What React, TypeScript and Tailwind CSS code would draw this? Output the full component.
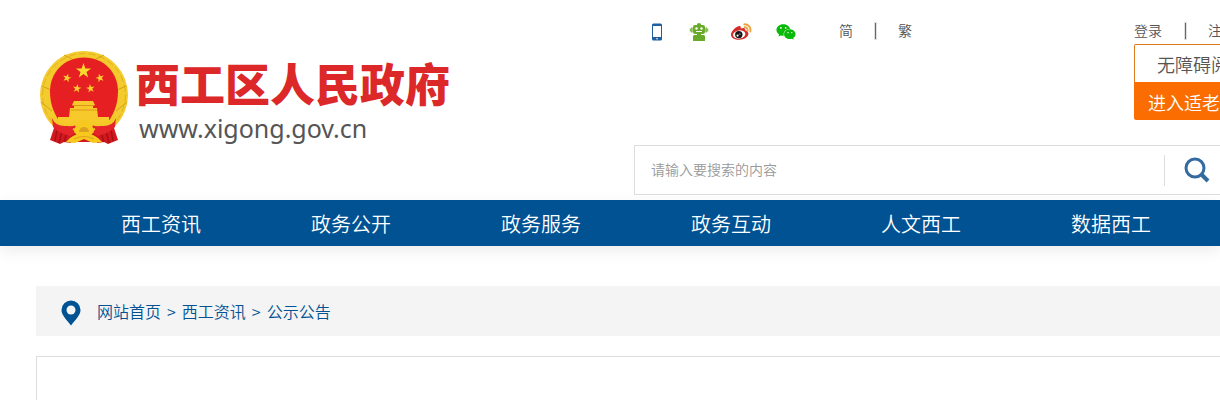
import { useState } from 'react';
import { FaWeixin } from 'react-icons/fa';

const navItems = ['西工资讯', '政务公开', '政务服务', '政务互动', '人文西工', '数据西工'];

const crumbs = ['网站首页', '西工资讯', '公示公告'];

const smallStars = [
  { x: 27, y: 28, r: 4.5, a: 15 },
  { x: 60, y: 28, r: 4.5, a: -15 },
  { x: 37, y: 38.5, r: 4.5, a: 10 },
  { x: 50.5, y: 38.5, r: 4.5, a: -10 }
];

function starPoints(cx: number, cy: number, r: number, rotate = 0) {
  return Array.from({ length: 10 }, (_, i) => {
    const radius = i % 2 === 0 ? r : r * 0.39;
    const angle = ((i * 36 - 90 + rotate) * Math.PI) / 180;
    return `${(cx + radius * Math.cos(angle)).toFixed(2)},${(cy + radius * Math.sin(angle)).toFixed(2)}`;
  }).join(' ');
}

function Emblem() {
  return (
    <svg className="w-22 h-24 shrink-0" viewBox="0 0 88 96" aria-hidden="true">
      <circle cx="44" cy="45" r="44" fill="#f3cb2c" />
      <circle cx="44" cy="45" r="41.5" fill="none" stroke="#e3b024" strokeWidth="1" strokeDasharray="7 3" />
      <path d="M1 52l11 9M2 36l9 4M87 52l-11 9M86 36l-9 4M24 5l8 4M64 5l-8 4" stroke="#d39f1d" strokeWidth="1" />
      <path d="M44 7.500c20 0 34 15 34 34 0 14-5 24-11 32H21c-6-8-11-18-11-32 0-19 14-34 34-34z" fill="#e61f22" />
      <polygon points={starPoints(43.5, 21, 8)} fill="#fbd92d" />
      {smallStars.map((s) => (
        <polygon key={`${s.x}-${s.y}`} points={starPoints(s.x, s.y, s.r, s.a)} fill="#fbd02d" />
      ))}
      {/* Gate tower */}
      <path d="M34 51h19l2 4-2 1v2h4l1 9h11v6H18v-6h11l1-9h4v-2l-2-1z" fill="#f8c92a" />
      <path d="M33 55.500h21M31 60h26" stroke="#dd951b" strokeWidth="1" />
      {/* Ribbon */}
      <path d="M14 76q12 5 17 5l4 4-4 8-7-1-4 2-10-4 4-12zM74 76q-12 5-17 5l-4 4 4 8 7-1 4 2 10-4-4-12z" fill="#d2191f" />
      <path d="M17 80l-2 11M22 81l-3 12M27 83l-3 9M71 80l2 11M66 81l3 12M61 83l3 9" stroke="#a90f17" strokeWidth="1.5" />
      <path d="M12 68q3 8 13 8l10-1 3 8-8 3q-12-3-17-9zM76 68q-3 8-13 8l-10-1-3 8 8 3q12-3 17-9z" fill="#e5252a" />
      <path d="M26 92l8-9h20l8 9z" fill="#d2191f" />
      <path d="M13 66q8 8 20 7l11-3 11 3q12 1 20-7l-1 5q-8 6-19 5l-11-3-11 3q-11 1-19-5z" fill="#f4c826" />
      {/* Gear */}
      <path d="M34 82a10 10 0 0120 0l-3 3H37z" fill="#f7c91f" />
      <path d="M36 80l-3-1M38 75l-3-2M42 72l-1-2M46 72l1-2M50 75l3-2M52 80l3-1" stroke="#f7c91f" strokeWidth="2" />
      <path d="M39 82a5 5 0 0110 0z" fill="#dda11f" />
      <path d="M30 88q7-5 14-5t14 5l4 4-9 1-9-4-9 4-9-1z" fill="#f7c91f" />
      <path d="M34 89q10-5 20 0" fill="none" stroke="#dfa21c" strokeWidth="1" />
    </svg>
  );
}

function PhoneIcon() {
  return (
    <svg className="w-3 h-[18px]" viewBox="0 0 12 18" aria-hidden="true">
      <rect x="1" y="0.5" width="10" height="17" rx="1.5" fill="#1f5f9f" />
      <rect x="2" y="3" width="8" height="11" fill="#fff" />
      <circle cx="6" cy="15.8" r="0.8" fill="#fff" />
    </svg>
  );
}

function RobotIcon() {
  return (
    <svg className="w-5 h-[18px]" viewBox="0 0 20 18" fill="#6aaa2a" aria-hidden="true">
      <path d="M8 1.500a2 1.500 0 014 0V2h2a2 2 0 012 2v5a2 2 0 01-2 2H6a2 2 0 01-2-2V4a2 2 0 012-2h2z" />
      <rect x="2.2" y="4.500" width="1.4" height="5" />
      <rect x="16.4" y="4.500" width="1.4" height="5" />
      <rect x="0.8" y="5.500" width="1" height="3" />
      <rect x="18.2" y="5.500" width="1" height="3" />
      <path d="M8 11h4v1h3l1 1v5H4v-5l1-1h3z" />
      <circle cx="7.500" cy="5.500" r="1.200" fill="#fff" />
      <circle cx="12.500" cy="5.500" r="1.200" fill="#fff" />
      <path d="M7 8.500h6" stroke="#fff" strokeWidth="1" />
    </svg>
  );
}

function WeiboIcon() {
  return (
    <svg className="w-[22px] h-[18px]" viewBox="0 0 22 18" aria-hidden="true">
      <path d="M8.5 3.2c1.8-.5 2.7.4 2.2 2.2 2.8-1 5-.6 4.4 1.9 2 .6 3.3 1.7 3.3 3.5 0 3.2-4.3 6-9.2 6C4.5 16.8 1 14.8 1 11.7 1 8.5 5 4.1 8.5 3.2z" fill="#d52c2b" />
      <ellipse cx="9.2" cy="11.5" rx="6.2" ry="4.1" transform="rotate(-8 9.2 11.5)" fill="#fff" />
      <circle cx="8.8" cy="11.6" r="3.7" fill="#151515" />
      <circle cx="7.6" cy="12.6" r="1.1" fill="#fff" />
      <circle cx="9.9" cy="11" r="0.6" fill="#fff" />
      <path d="M14.2 1.3a5.8 5.8 0 016.1 7.3M14.6 4.2a3 3 0 013 3.7" fill="none" stroke="#eda13a" strokeWidth="1.8" strokeLinecap="round" />
    </svg>
  );
}

function SearchIcon() {
  return (
    <svg className="w-[26px] h-[26px]" viewBox="0 0 26 26" fill="none" stroke="#336a9f" aria-hidden="true">
      <circle cx="11" cy="11" r="9" strokeWidth="3" />
      <path d="M17.5 17.5l6.5 6.5" strokeWidth="4" />
    </svg>
  );
}

function PinIcon() {
  return (
    <svg className="w-5 h-[26px]" viewBox="0 0 20 26" aria-hidden="true">
      <path d="M10 .5a9.5 9.5 0 00-9.5 9.5c0 5.500 5.500 10 9.5 15.500 4-5.500 9.5-10 9.5-15.500A9.5 9.5 0 0010 .5z" fill="#005293" />
      <circle cx="10" cy="10" r="4.5" fill="#f4f4f4" />
    </svg>
  );
}

function Separator() {
  return <span className="w-px h-4 mt-0.5 bg-[#666] outline outline-[#666]/20"></span>;
}

export default function App() {
  const [keyword, setKeyword] = useState('');

  return (
    <div className="overflow-hidden bg-white font-['Noto_Sans_CJK_SC',sans-serif] font-[350] text-[#555]">
      {/* Header */}
      <header className="ml-9 min-w-[1200px] max-w-[1200px] h-[200px] flex justify-between">
        <a href="#" className="flex items-start gap-[7px] pl-1 pt-[50px]">
          <Emblem />
          <span className="flex flex-col pt-1">
            <span className="text-[45px] leading-[58px] font-black text-[#dc2828]">西工区人民政府</span>
            <span className="pl-1 text-[25px] leading-8 font-normal text-[#555] font-['Noto_Sans',sans-serif]">www.xigong.gov.cn</span>
          </span>
        </a>

        <div className="w-[602px] pt-5">
          <div className="flex justify-between text-sm leading-5">
            <div className="flex items-start">
              <div className="flex items-center h-6 pl-[17px]">
                <a href="#" aria-label="手机版"><PhoneIcon /></a>
                <a href="#" aria-label="智能机器人" className="ml-[26px]"><RobotIcon /></a>
                <a href="#" aria-label="微博" className="ml-[21px]"><WeiboIcon /></a>
                <a href="#" aria-label="微信" className="ml-6"><FaWeixin className="w-5 h-5 text-[#09b909]" /></a>
              </div>
              <div className="flex items-center gap-[22px] ml-[43px]">
                <a href="#">简</a>
                <Separator />
                <a href="#">繁</a>
              </div>
            </div>

            <div className="w-[102px]">
              <div className="flex items-center justify-between">
                <a href="#">登录</a>
                <Separator />
                <a href="#">注册</a>
              </div>
              <div className="flex flex-col w-[136px] pt-1 text-lg">
                <button type="button" className="h-[38px] rounded-t-xs border border-[#e07a1f] border-b-0">无障碍阅读</button>
                <button type="button" className="h-[38px] pt-0.5 rounded-b-xs bg-[#fb6d00] text-white">进入适老模式</button>
              </div>
            </div>
          </div>

          <form className="flex items-center h-[50px] mt-[25px] border border-[#ddd]" onSubmit={(e) => e.preventDefault()}>
            <input
              type="text"
              aria-label="搜索"
              placeholder="请输入要搜索的内容"
              value={keyword}
              onChange={(e) => setKeyword(e.target.value)}
              className="flex-1 h-12 px-4 pb-0.5 text-sm outline-none placeholder:text-[#999]"
            />
            <button type="submit" aria-label="搜索" className="flex items-center w-[71px] h-[31px] pl-[19px] border-l border-[#ddd]">
              <SearchIcon />
            </button>
          </form>
        </div>
      </header>

      {/* Main nav */}
      <nav className="h-[46px] bg-[#005293] shadow-[0_5px_15px_rgba(0,0,0,0.08)]">
        <ul className="flex pl-[66px] text-xl leading-[48px] text-white">
          {navItems.map((item) => (
            <li key={item} className="w-[190px] shrink-0 text-center">
              <a href="#">{item}</a>
            </li>
          ))}
        </ul>
      </nav>

      <main className="ml-9 min-w-[1200px] max-w-[1200px] pt-10">
        {/* Breadcrumb */}
        <div className="flex items-center gap-4 h-[50px] pl-[25px] bg-[#f4f4f4] text-[#005293]">
          <span className="pt-1"><PinIcon /></span>
          <ol className="flex gap-1.5">
            {crumbs.map((crumb, i) => (
              <li key={crumb} className="flex gap-1.5">
                {i > 0 && <span>&gt;</span>}
                <a href="#">{crumb}</a>
              </li>
            ))}
          </ol>
        </div>

        <div className="mt-5 min-h-11 border border-b-0 border-[#ddd]"></div>
      </main>
    </div>
  );
}
